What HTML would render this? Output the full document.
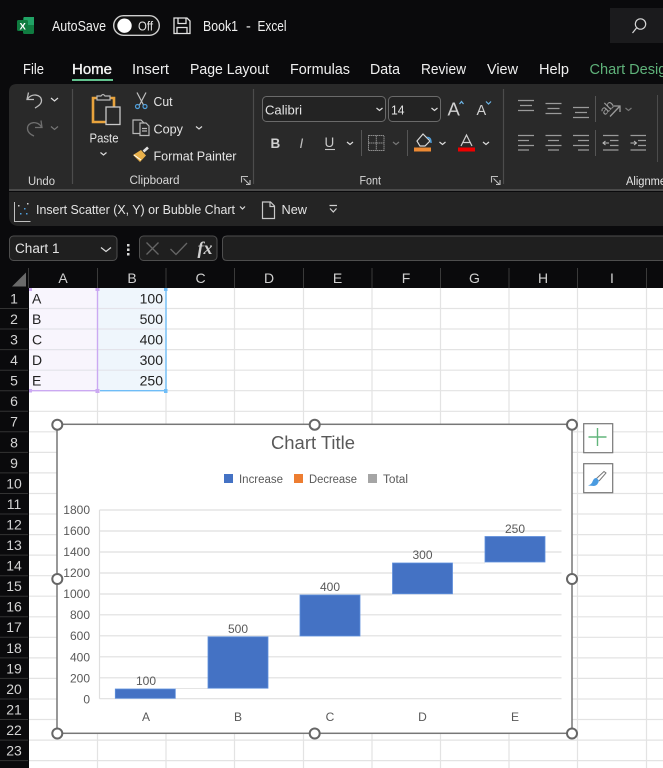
<!DOCTYPE html>
<html><head><meta charset="utf-8"><style>
html,body{margin:0;padding:0;background:#0a0a0c;width:663px;height:768px;overflow:hidden}
svg{display:block}
text{font-family:"Liberation Sans",sans-serif;font-size:14px;fill:#e6e6e6}
.t{font-size:14.5px;fill:#f0f0f0}
.s{font-size:13px;fill:#e4e4e4}
.g{font-size:11.5px;fill:#d8d8d8}
.r{font-size:14px;fill:#d4d4d4;text-anchor:middle}
.c{font-size:14px;fill:#d0d0d0;text-anchor:middle}
.d{font-size:14px;fill:#222}
.a{font-size:12px;fill:#595959;text-anchor:end}
.m{font-size:12px;fill:#595959;text-anchor:middle}
.l{font-size:11.5px;fill:#595959}
.ic{fill:none;stroke:#b8b8b8;stroke-width:1.2}
.ln{stroke:#9a9a9a;stroke-width:1.3;fill:none}
.ch{fill:none;stroke:#dcdcdc;stroke-width:1.2}
.dim{fill:none;stroke:#777;stroke-width:1.2}
</style></head><body>
<svg width="663" height="768" viewBox="0 0 663 768" xmlns="http://www.w3.org/2000/svg">
<rect width="663" height="768" fill="#0a0a0c"/>
<!-- title bar -->
<rect x="23" y="17" width="11" height="17" rx="1.5" fill="#107c41"/>
<rect x="24" y="17" width="10" height="8" fill="#21a366"/>
<rect x="17" y="20" width="11" height="11" rx="1.5" fill="#0f7b3f"/>
<text x="19.5" y="29.5" style="font-size:9.5px;font-weight:bold;fill:#fff">X</text>
<text x="52" y="31" class="t" textLength="54" lengthAdjust="spacingAndGlyphs">AutoSave</text>
<rect x="113.7" y="15.7" width="45.6" height="19.6" rx="9.8" fill="#111" stroke="#cfcfcf" stroke-width="1.4"/>
<circle cx="124.5" cy="25.7" r="7.2" fill="#fff"/>
<text x="138" y="30.5" class="s" textLength="15" lengthAdjust="spacingAndGlyphs">Off</text>
<path d="M174 18H187L190 21V33.500H174ZM178 18V23.500H186V18M177 33.500V27.500H187V33.500" fill="none" stroke="#e2e2e2" stroke-width="1.3"/>
<text x="203" y="31" class="t" textLength="35" lengthAdjust="spacingAndGlyphs">Book1</text>
<text x="246" y="31" class="t">-</text>
<text x="257.500" y="31" class="t" textLength="29" lengthAdjust="spacingAndGlyphs">Excel</text>
<path d="M610 8H663V43H610Z" fill="#1b1b1d"/>
<circle cx="640.500" cy="24" r="5.200" fill="none" stroke="#d6d6d6" stroke-width="1.200"/>
<path d="M636.500 28L632.500 33" stroke="#d6d6d6" stroke-width="1.200"/>
<!-- tabs -->
<text x="23" y="74" class="t" textLength="21" lengthAdjust="spacingAndGlyphs">File</text>
<text x="72" y="74" class="t" style="fill:#f4f4f4;stroke:#f4f4f4;stroke-width:.35" textLength="40" lengthAdjust="spacingAndGlyphs">Home</text>
<rect x="72" y="79" width="41" height="2" fill="#62c28e"/>
<text x="132" y="74" class="t" textLength="37" lengthAdjust="spacingAndGlyphs">Insert</text>
<text x="190" y="74" class="t" textLength="79" lengthAdjust="spacingAndGlyphs">Page Layout</text>
<text x="290" y="74" class="t" textLength="60" lengthAdjust="spacingAndGlyphs">Formulas</text>
<text x="370" y="74" class="t" textLength="30" lengthAdjust="spacingAndGlyphs">Data</text>
<text x="421" y="74" class="t" textLength="45" lengthAdjust="spacingAndGlyphs">Review</text>
<text x="487" y="74" class="t" textLength="31" lengthAdjust="spacingAndGlyphs">View</text>
<text x="539" y="74" class="t" textLength="30" lengthAdjust="spacingAndGlyphs">Help</text>
<text x="589.500" y="74" class="t" style="fill:#5fb27a" textLength="85" lengthAdjust="spacingAndGlyphs">Chart Design</text>
<!-- ribbon -->
<path d="M9 190V92Q9 84 17 84H663V190Z" fill="#292929"/>
<rect x="9" y="189" width="654" height="2" fill="#4a4a4a"/>
<path d="M9 192H663V226H19Q9 226 9 216Z" fill="#242424"/>
<path d="M72.500 89V184M253.500 89V184M503.500 89V184" stroke="#4c4c4c" stroke-width="1.200"/>
<path d="M657.500 95V162" stroke="#4c4c4c" stroke-width="1"/>
<!-- undo -->
<path d="M28.500 92.500L27 99.500H34M27.500 99C31 93 41.500 94 41.500 100.500C41.500 104 38.500 106 35 108" fill="none" stroke="#bdbdbd" stroke-width="1.300"/>
<path d="M51 98L54.500 101L58 98" class="ch"/>
<path d="M41 120.500L42 127.500H35M41.500 127C38 120.500 27.500 121.500 27.500 128.500C27.500 132 30.500 134.500 34 136" fill="none" stroke="#6e6e6e" stroke-width="1.300"/>
<path d="M51 126.500L54.500 129.500L58 126.500" class="dim"/>
<text x="28" y="185" class="g" textLength="27" lengthAdjust="spacingAndGlyphs">Undo</text>
<!-- paste -->
<path d="M93 98H114V122H93Z" fill="none" stroke="#e8a33d" stroke-width="2.600"/>
<path d="M97 100V96H101Q103 93 105 96H110V100Z" fill="#292929" stroke="#b8b8b8" stroke-width="1.200"/>
<rect x="106" y="107" width="14" height="17.500" fill="#292929" stroke="#c8c8c8" stroke-width="1.300"/>
<text x="89.500" y="142.500" class="s" textLength="29" lengthAdjust="spacingAndGlyphs">Paste</text>
<path d="M100.500 152.500L103.500 155L106.500 152.500" class="ch"/>
<!-- cut copy fp -->
<path d="M137 92.500L143.500 105M146 92.500L139.500 105" fill="none" stroke="#c0c0c0" stroke-width="1.200"/>
<circle cx="137.500" cy="106.500" r="2" fill="none" stroke="#4f9fdc" stroke-width="1.200"/>
<circle cx="145" cy="106.500" r="2" fill="none" stroke="#4f9fdc" stroke-width="1.200"/>
<text x="153.500" y="106" class="s" textLength="19" lengthAdjust="spacingAndGlyphs">Cut</text>
<path d="M140 133.500H133V120H141L144 123" class="ic"/>
<path d="M140 123H146L149 126V135.500H140ZM142 128.500H147M142 131H147" class="ic"/>
<text x="153.500" y="133.500" class="s" textLength="29.500" lengthAdjust="spacingAndGlyphs">Copy</text>
<path d="M196 126.500L199 129L202 126.500" class="ch"/>
<path d="M133 155L141 150L146 155.500L140 162Z" fill="#e8b04a"/>
<path d="M143.500 151.500L148 147.500" stroke="#e2e2e2" stroke-width="2.600"/>
<path d="M134 155L141 160" stroke="#fff" stroke-width="1"/>
<text x="153.500" y="160.500" class="s" textLength="83" lengthAdjust="spacingAndGlyphs">Format Painter</text>
<text x="129.500" y="184" class="g" textLength="50" lengthAdjust="spacingAndGlyphs">Clipboard</text>
<path d="M241.500 182.500V176.500H248M246 184.500H250V180M243.500 178.500L249 184" fill="none" stroke="#bdbdbd" stroke-width="1.100"/>
<!-- font -->
<rect x="262.500" y="96.500" width="123" height="25" rx="4" fill="#232323" stroke="#6a6a6a"/>
<text x="265" y="114.500" class="s" textLength="37" lengthAdjust="spacingAndGlyphs">Calibri</text>
<path d="M376.500 108L379.500 110.500L382.500 108" class="ch"/>
<rect x="388.500" y="96.500" width="52" height="25" rx="4" fill="#232323" stroke="#6a6a6a"/>
<text x="391" y="114.500" class="s" textLength="13.500" lengthAdjust="spacingAndGlyphs">14</text>
<path d="M431.500 108L434.500 110.500L437.500 108" class="ch"/>
<text x="447.500" y="115.500" style="font-size:18.500px;fill:#d0d0d0">A</text>
<path d="M459.500 104L461.500 101.500L463.500 104" fill="none" stroke="#6eb6e8" stroke-width="1.200"/>
<text x="476.500" y="115" style="font-size:14.500px;fill:#d0d0d0">A</text>
<path d="M486 101.500L488.500 104L491 101.500" fill="none" stroke="#6eb6e8" stroke-width="1.200"/>
<text x="270.500" y="148" style="font-size:13.500px;font-weight:bold;fill:#d0d0d0">B</text>
<text x="299.500" y="148" style="font-size:13.500px;font-style:italic;fill:#c0c0c0">I</text>
<text x="324.500" y="147" style="font-size:13.500px;fill:#c8c8c8">U</text>
<path d="M325 149.500H335" stroke="#c8c8c8" stroke-width="1.100"/>
<path d="M347 142L350 144.500L353 142" class="ch"/>
<path d="M361.500 130V156M407.500 130V156" stroke="#555" stroke-width="1"/>
<path d="M368.500 135.500H384V150.500H368.500ZM376.300 135.500V150.500M368.500 143H384" fill="none" stroke="#8a8a8a" stroke-width="1" stroke-dasharray="1.500 .5"/>
<path d="M393 142L396 144.500L399 142" class="dim"/>
<path d="M417 141L423 134L430 141L425 146H420Z" fill="none" stroke="#d8d8d8" stroke-width="1.200"/>
<path d="M427 137.500Q431 137 431 143" fill="none" stroke="#4f9fdc" stroke-width="1.500"/>
<rect x="414" y="147.500" width="17" height="4" fill="#ed8a34"/>
<path d="M439.500 142L442.500 144.500L445.500 142" class="ch"/>
<path d="M461 146L466.500 135L472 146M463 142.500H470" fill="none" stroke="#d0d0d0" stroke-width="1.200"/>
<rect x="458" y="147.500" width="17" height="4" fill="#ee0000"/>
<path d="M483 142L486 144.500L489 142" class="ch"/>
<text x="359.500" y="184.500" class="g" textLength="21.500" lengthAdjust="spacingAndGlyphs">Font</text>
<path d="M491.500 182.500V176.500H498M496 184.500H500V180M493.500 178.500L499 184" fill="none" stroke="#bdbdbd" stroke-width="1.100"/>
<!-- alignment -->
<path d="M518 100.500H534M520 105.500H532M518 110.500H534" class="ln"/>
<path d="M545.500 103.500H561.500M547.500 108.500H559.500M545.500 113.500H561.500" class="ln"/>
<path d="M573 107.500H589M575 112.500H587M573 117.500H589" class="ln"/>
<path d="M595.500 96V122M595.500 130V156" stroke="#555" stroke-width="1"/>
<text x="600" y="112" style="font-size:13px;fill:#9a9a9a" transform="rotate(-45 607 108)">ab</text>
<path d="M610 116.500L619.500 106.500M614 106H620V112" class="ln"/>
<path d="M625.500 108L628.500 110.500L631.500 108" class="dim"/>
<path d="M518 135.500H534M518 140.500H529M518 145.500H534M518 150H529" class="ln"/>
<path d="M545.500 135.500H561.500M548 140.500H559M545.500 145.500H561.500M548 150H559" class="ln"/>
<path d="M573 135.500H589M578 140.500H589M573 145.500H589M578 150H589" class="ln"/>
<path d="M603 135.500H618.500M610 140.500H618.500M610 145.500H618.500M603 150H618.500" class="ln"/>
<path d="M609 143H603M605.500 141L603 143L605.500 145" fill="none" stroke="#bbb" stroke-width="1"/>
<path d="M630.500 135.500H646M638 140.500H646M638 145.500H646M630.500 150H646" class="ln"/>
<path d="M630.500 143H636.500M634 141L636.500 143L634 145" fill="none" stroke="#bbb" stroke-width="1"/>
<text x="626" y="185" class="g" style="fill:#e6e6e6" textLength="40" lengthAdjust="spacingAndGlyphs">Alignme</text>
<!-- chart band -->
<path d="M14.500 202V221.500H30.500" fill="none" stroke="#c0c0c0" stroke-width="1"/>
<rect x="20" y="213" width="1.500" height="1.500" fill="#4f9fdc"/><rect x="24" y="208" width="1.500" height="1.500" fill="#4f9fdc"/><rect x="27" y="203" width="1.500" height="1.500" fill="#cfcfcf"/><rect x="18" y="205" width="1.500" height="1.500" fill="#cfcfcf"/><rect x="26" y="213" width="1.500" height="1.500" fill="#4f9fdc"/>
<text x="36" y="214" class="s" textLength="199" lengthAdjust="spacingAndGlyphs">Insert Scatter (X, Y) or Bubble Chart</text>
<path d="M240 206.500L242.500 209L245 206.500" class="ch"/>
<path d="M262.500 202H270.500L274.500 206V218.500H262.500ZM270 202V206.500H274.500" fill="none" stroke="#c8c8c8" stroke-width="1.200"/>
<text x="281.500" y="214" class="s" textLength="25.500" lengthAdjust="spacingAndGlyphs">New</text>
<path d="M329.500 205.500H337M330 208.500L333.300 212L336.500 208.500" fill="none" stroke="#d0d0d0" stroke-width="1.200"/>
<!-- formula bar -->
<rect x="9.500" y="236" width="107.500" height="24.500" rx="4" fill="#1f1f1f" stroke="#4e4e4e"/>
<text x="15" y="253" class="s" style="font-size:13.500px" textLength="44.500" lengthAdjust="spacingAndGlyphs">Chart 1</text>
<path d="M101 247.500L106 251.500L111 247.500" class="ch"/>
<rect x="127" y="244" width="2.500" height="2.500" fill="#d8d8d8"/><rect x="127" y="248.500" width="2.500" height="2.500" fill="#d8d8d8"/><rect x="127" y="253" width="2.500" height="2.500" fill="#d8d8d8"/>
<rect x="139.500" y="236" width="77.500" height="24.500" rx="4" fill="#1f1f1f" stroke="#4e4e4e"/>
<path d="M146.500 242.500L158.500 254.500M158.500 242.500L146.500 254.500M170.500 249L176 254.500L187 243" fill="none" stroke="#666" stroke-width="1.300"/>
<text x="197.500" y="254" style="font-family:'Liberation Serif',serif;font-size:18px;font-style:italic;font-weight:bold;fill:#cfcfcf">fx</text>
<path d="M663 236H227Q222.500 236 222.500 240.500V256Q222.500 260.500 227 260.500H663" fill="#1f1f1f" stroke="#4e4e4e"/>
<!-- sheet -->
<rect x="29" y="288" width="634" height="480" fill="#ffffff"/>
<path d="M12 286.500L26 272.500V286.500Z" fill="#6a6a6a"/>
<path d="M28.500 268V288M97.500 268V288M166 268V288M234.500 268V288M303.500 268V288M372 268V288M440.500 268V288M509 268V288M577.500 268V288M646.500 268V288" stroke="#3a3a3a" stroke-width="1"/>
<text x="63" y="283" class="c">A</text><text x="132" y="283" class="c">B</text><text x="200.500" y="283" class="c">C</text><text x="269" y="283" class="c">D</text><text x="337.500" y="283" class="c">E</text><text x="406" y="283" class="c">F</text><text x="474.500" y="283" class="c">G</text><text x="543" y="283" class="c">H</text><text x="612" y="283" class="c">I</text>
<path d="M29 308.500H663M29 329H663M29 349.600H663M29 370.200H663M29 390.700H663M29 411.300H663M29 431.800H663M29 452.400H663M29 472.900H663M29 493.500H663M29 514H663M29 534.600H663M29 555.100H663M29 575.700H663M29 596.200H663M29 616.800H663M29 637.300H663M29 657.900H663M29 678.400H663M29 699H663M29 719.500H663M29 740.100H663M29 760.600H663M97.500 288V768M166 288V768M234.500 288V768M303.500 288V768M372 288V768M440.500 288V768M509 288V768M577.500 288V768M646.500 288V768" stroke="#e3e3e3" stroke-width="1.200" fill="none"/>
<path d="M0 308.500H28M0 329H28M0 349.600H28M0 370.200H28M0 390.700H28M0 411.300H28M0 431.800H28M0 452.400H28M0 472.900H28M0 493.500H28M0 514H28M0 534.600H28M0 555.100H28M0 575.700H28M0 596.200H28M0 616.800H28M0 637.300H28M0 657.900H28M0 678.400H28M0 699H28M0 719.500H28M0 740.100H28M0 760.600H28" stroke="#333" stroke-width="1"/>
<text x="14" y="303.500" class="r">1</text><text x="14" y="324" class="r">2</text><text x="14" y="344.500" class="r">3</text><text x="14" y="365" class="r">4</text><text x="14" y="385.500" class="r">5</text><text x="14" y="406" class="r">6</text><text x="14" y="426.700" class="r">7</text><text x="14" y="447.300" class="r">8</text><text x="14" y="467.800" class="r">9</text><text x="14" y="488.400" class="r">10</text><text x="14" y="508.900" class="r">11</text><text x="14" y="529.500" class="r">12</text><text x="14" y="550" class="r">13</text><text x="14" y="570.600" class="r">14</text><text x="14" y="591.100" class="r">15</text><text x="14" y="611.700" class="r">16</text><text x="14" y="632.200" class="r">17</text><text x="14" y="652.800" class="r">18</text><text x="14" y="673.300" class="r">19</text><text x="14" y="693.900" class="r">20</text><text x="14" y="714.400" class="r">21</text><text x="14" y="735" class="r">22</text><text x="14" y="755.500" class="r">23</text>
<!-- selection -->
<rect x="29" y="288" width="68.500" height="102.500" fill="#f8f5fd"/>
<rect x="98" y="288" width="68" height="102.500" fill="#eff6fc"/>
<path d="M29 308.500H166M29 329H166M29 349.600H166M29 370.200H166" stroke="#e3e3ea" stroke-width="1.200"/>
<path d="M97.500 288V390.500M29 390.700H97.500" stroke="#cba9f2" stroke-width="1.400" fill="none"/>
<path d="M166 288V390.700M100 390.700H166" stroke="#6fbdf7" stroke-width="1.400" fill="none"/>
<rect x="29" y="288" width="3" height="3" fill="#cba9f2"/><rect x="95.500" y="288" width="4" height="3" fill="#cba9f2"/><rect x="164" y="288" width="3.500" height="3" fill="#6fbdf7"/><rect x="29" y="389" width="3" height="3.500" fill="#cba9f2"/><rect x="95.500" y="389" width="4" height="4" fill="#cba9f2"/><rect x="164" y="389" width="3.500" height="4" fill="#6fbdf7"/>
<text x="32" y="303.500" class="d">A</text><text x="32" y="324" class="d">B</text><text x="32" y="344.500" class="d">C</text><text x="32" y="365" class="d">D</text><text x="32" y="385.500" class="d">E</text>
<text x="163" y="303.500" class="d" text-anchor="end">100</text><text x="163" y="324" class="d" text-anchor="end">500</text><text x="163" y="344.500" class="d" text-anchor="end">400</text><text x="163" y="365" class="d" text-anchor="end">300</text><text x="163" y="385.500" class="d" text-anchor="end">250</text>
<!-- chart -->
<rect x="57" y="424.300" width="515" height="309" fill="#fff" stroke="#777" stroke-width="1.500"/>
<text x="313" y="449" style="font-size:18px;fill:#595959" text-anchor="middle" textLength="84" lengthAdjust="spacingAndGlyphs">Chart Title</text>
<rect x="224" y="474" width="9" height="9" fill="#4472c4"/>
<text x="239" y="483" class="l" textLength="44" lengthAdjust="spacingAndGlyphs">Increase</text>
<rect x="294" y="474" width="9" height="9" fill="#ed7d31"/>
<text x="309" y="483" class="l" textLength="48" lengthAdjust="spacingAndGlyphs">Decrease</text>
<rect x="368" y="474" width="9" height="9" fill="#a5a5a5"/>
<text x="383" y="483" class="l" textLength="25" lengthAdjust="spacingAndGlyphs">Total</text>
<path d="M99.500 510H561.500M99.500 531H561.500M99.500 552H561.500M99.500 573H561.500M99.500 594H561.500M99.500 614.800H561.500M99.500 635.800H561.500M99.500 656.800H561.500M99.500 677.800H561.500M99.500 698.700H561.500M99.500 510V698.700" stroke="#dfdfdf" stroke-width="1.200" fill="none"/>
<text x="90" y="514" class="a">1800</text><text x="90" y="535" class="a">1600</text><text x="90" y="556" class="a">1400</text><text x="90" y="577" class="a">1200</text><text x="90" y="598" class="a">1000</text><text x="90" y="619" class="a">800</text><text x="90" y="640" class="a">600</text><text x="90" y="661.500" class="a">400</text><text x="90" y="682.500" class="a">200</text><text x="90" y="703.500" class="a">0</text>
<path d="M175.500 688.500H208M268 636.500H299.500M360 595H392M453 563H485" stroke="#e4e4e4" stroke-width="1"/>
<g fill="#4472c4" stroke="#5f8fdc" stroke-width=".8">
<rect x="115.300" y="689" width="60" height="9.300"/>
<rect x="208" y="636.800" width="60" height="51.400"/>
<rect x="300" y="595" width="60" height="41"/>
<rect x="392.500" y="563" width="60" height="30.800"/>
<rect x="485" y="536.500" width="60" height="25.500"/>
</g>
<text x="146" y="685" class="m">100</text><text x="238" y="633" class="m">500</text><text x="330" y="591" class="m">400</text><text x="422.500" y="559" class="m">300</text><text x="515" y="533" class="m">250</text>
<text x="146" y="721" class="m">A</text><text x="238" y="721" class="m">B</text><text x="330" y="721" class="m">C</text><text x="422.500" y="721" class="m">D</text><text x="515" y="721" class="m">E</text>
<g fill="#fff" stroke="#666" stroke-width="2">
<circle cx="57.300" cy="424.700" r="5"/><circle cx="314.700" cy="424.700" r="5"/><circle cx="572" cy="424.700" r="5"/>
<circle cx="57.300" cy="579" r="5"/><circle cx="572" cy="579" r="5"/>
<circle cx="57.300" cy="733.500" r="5"/><circle cx="314.700" cy="733.500" r="5"/><circle cx="572" cy="733.500" r="5"/>
</g>
<rect x="583.700" y="423.700" width="29" height="29" fill="#fff" stroke="#777" stroke-width="1.200"/>
<path d="M588.500 437H606.500M597.500 428V446" stroke="#62b57c" stroke-width="1.400"/>
<rect x="583.700" y="463.700" width="29" height="29" fill="#fff" stroke="#777" stroke-width="1.200"/>
<path d="M596.500 478.500L604 471.500L606 473L599 481" fill="#fff" stroke="#777" stroke-width="1"/>
<path d="M588 485.500Q592 484 592.500 481.500Q594 477.500 596.500 478L599 480.500Q598 485.500 594 486Z" fill="#4a9be0"/>
</svg>
</body></html>
